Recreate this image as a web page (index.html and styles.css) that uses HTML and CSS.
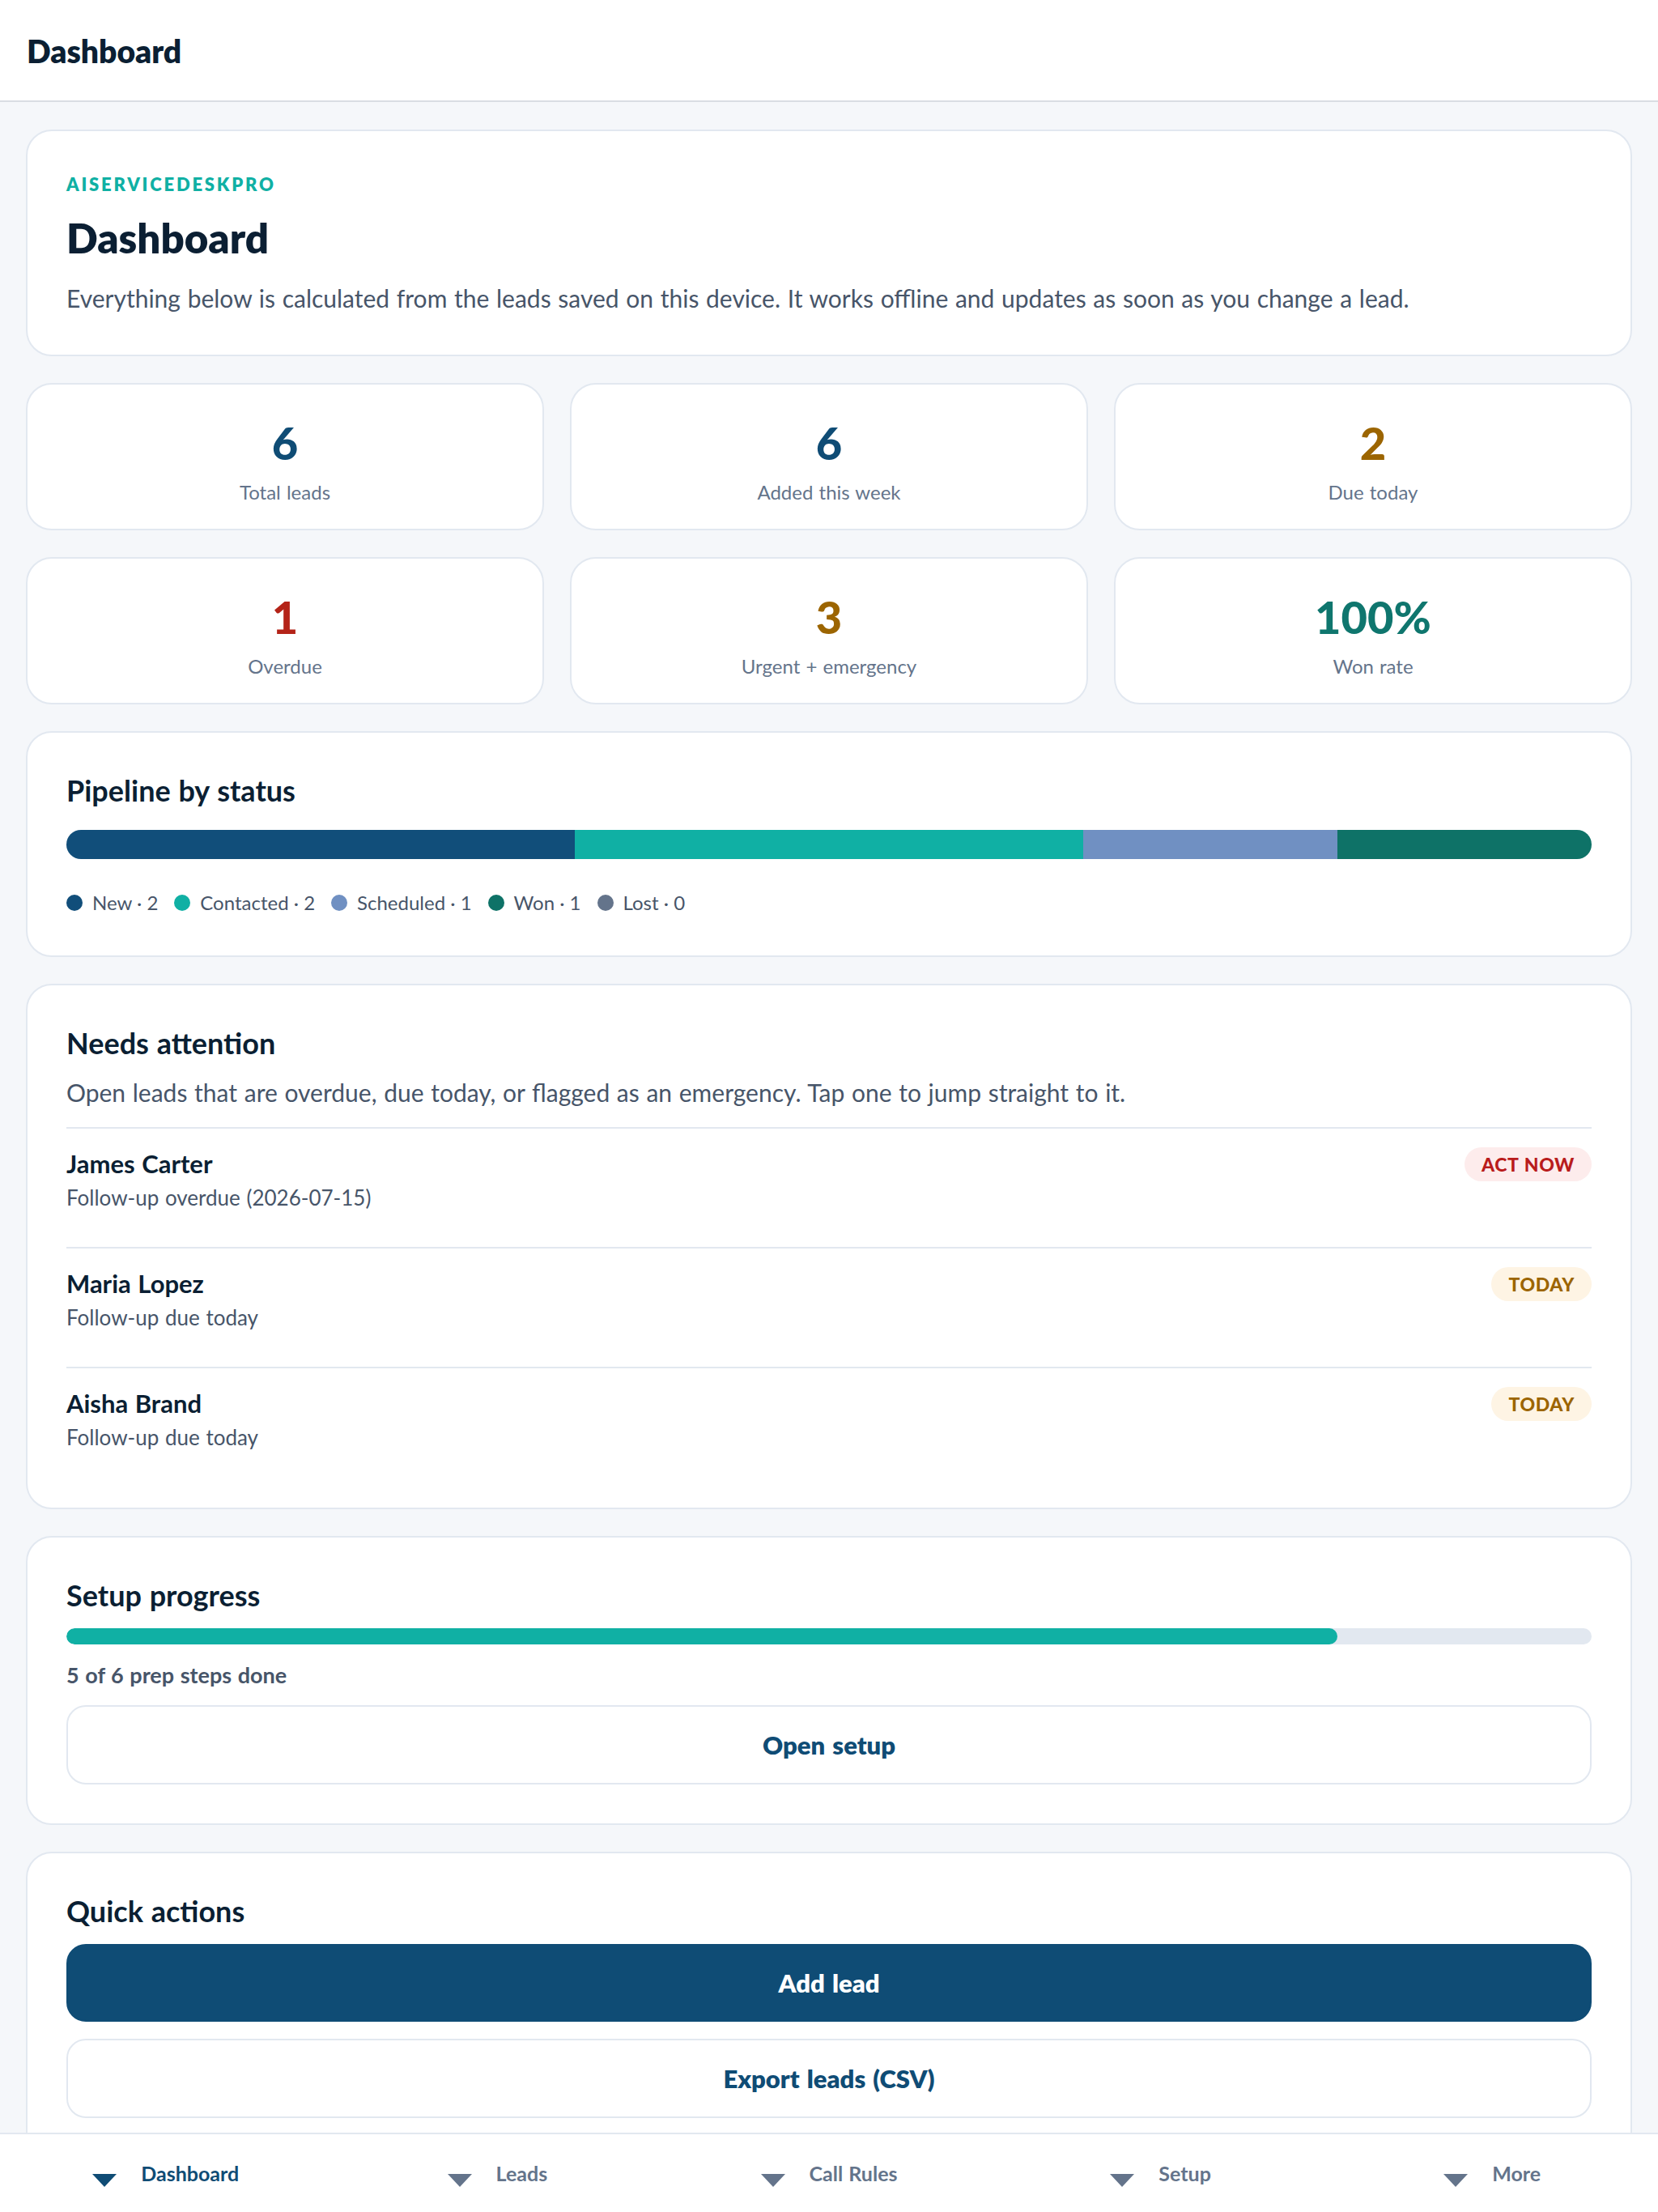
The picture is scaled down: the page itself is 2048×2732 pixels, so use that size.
FILE: index.html
```html
<!DOCTYPE html>
<html>
<head>
  <title>Dashboard</title>
  <meta charset="UTF-8">
  <link rel="stylesheet" href="styles.css">
</head>
<body>
  <header class="topbar">
    <div class="topbar-title">Dashboard</div>
  </header>

  <main class="page">
    <section class="card intro">
      <div class="eyebrow">AISERVICEDESKPRO</div>
      <h1>Dashboard</h1>
      <p class="lead-text">Everything below is calculated from the leads saved on this device. It works offline and updates as soon as you change a lead.</p>
    </section>

    <section class="stats">
      <div class="stat">
        <div class="stat-value navy">6</div>
        <div class="stat-label">Total leads</div>
      </div>
      <div class="stat">
        <div class="stat-value navy">6</div>
        <div class="stat-label">Added this week</div>
      </div>
      <div class="stat">
        <div class="stat-value amber">2</div>
        <div class="stat-label">Due today</div>
      </div>
      <div class="stat">
        <div class="stat-value red">1</div>
        <div class="stat-label">Overdue</div>
      </div>
      <div class="stat">
        <div class="stat-value amber">3</div>
        <div class="stat-label">Urgent + emergency</div>
      </div>
      <div class="stat">
        <div class="stat-value teal">100%</div>
        <div class="stat-label">Won rate</div>
      </div>
    </section>

    <section class="card">
      <h2>Pipeline by status</h2>
      <div class="pipeline-bar">
        <div class="seg new" style="flex: 2"></div>
        <div class="seg contacted" style="flex: 2"></div>
        <div class="seg scheduled" style="flex: 1"></div>
        <div class="seg won" style="flex: 1"></div>
      </div>
      <div class="legend">
        <span class="legend-item"><span class="dot new"></span>New · 2</span>
        <span class="legend-item"><span class="dot contacted"></span>Contacted · 2</span>
        <span class="legend-item"><span class="dot scheduled"></span>Scheduled · 1</span>
        <span class="legend-item"><span class="dot won"></span>Won · 1</span>
        <span class="legend-item"><span class="dot lost"></span>Lost · 0</span>
      </div>
    </section>

    <section class="card">
      <h2>Needs attention</h2>
      <p class="card-note">Open leads that are overdue, due today, or flagged as an emergency. Tap one to jump straight to it.</p>
      <div class="attention-list">
        <div class="attention-row">
          <div>
            <div class="attention-name">James Carter</div>
            <div class="attention-sub">Follow-up overdue (2026-07-15)</div>
          </div>
          <span class="pill danger">ACT NOW</span>
        </div>
        <div class="attention-row">
          <div>
            <div class="attention-name">Maria Lopez</div>
            <div class="attention-sub">Follow-up due today</div>
          </div>
          <span class="pill warn">TODAY</span>
        </div>
        <div class="attention-row">
          <div>
            <div class="attention-name">Aisha Brand</div>
            <div class="attention-sub">Follow-up due today</div>
          </div>
          <span class="pill warn">TODAY</span>
        </div>
      </div>
    </section>

    <section class="card">
      <h2>Setup progress</h2>
      <div class="progress">
        <div class="progress-fill" style="width: 83.33%"></div>
      </div>
      <div class="progress-text">5 of 6 prep steps done</div>
      <button class="btn">Open setup</button>
    </section>

    <section class="card">
      <h2>Quick actions</h2>
      <div class="actions">
        <button class="btn primary">Add lead</button>
        <button class="btn">Export leads (CSV)</button>
      </div>
    </section>
  </main>

  <nav class="tabbar">
    <a class="tab active"><span class="tri"></span>Dashboard</a>
    <a class="tab"><span class="tri"></span>Leads</a>
    <a class="tab"><span class="tri"></span>Call Rules</a>
    <a class="tab"><span class="tri"></span>Setup</a>
    <a class="tab"><span class="tri"></span>More</a>
  </nav>
</body>
</html>
```

FILE: styles.css
```css
* {
  box-sizing: border-box;
}

body {
  margin: 0;
  font-family: Lato, "Noto Sans", sans-serif;
  word-spacing: 1px;
  background-color: #f5f7fa;
  color: #0b1f33;
}

.topbar {
  height: 126px;
  display: flex;
  align-items: center;
  padding: 0 33px;
  background-color: #fff;
  border-bottom: 2px solid #d9dde3;
}

.topbar-title {
  font-size: 39px;
  font-weight: 800;
  margin-top: 2px;
}

.page {
  display: flex;
  flex-direction: column;
  gap: 33px;
  padding: 34px 32px 64px;
}

.card {
  background-color: #fff;
  border: 2px solid #e2e8f0;
  border-radius: 32px;
  padding: 48px;
}

.eyebrow {
  font-size: 22px;
  line-height: 29px;
  font-weight: 800;
  letter-spacing: 2.8px;
  color: #10b0a4;
  margin-top: 3px;
}

h1 {
  margin: 22px 0 0;
  font-size: 51px;
  line-height: 60px;
  font-weight: 800;
}

.lead-text {
  margin: 22px 0 0;
  font-size: 30px;
  line-height: 44px;
  color: #475569;
}

h2 {
  margin: 0;
  font-size: 36px;
  line-height: 46px;
  font-weight: 700;
}

.stats {
  display: grid;
  grid-template-columns: repeat(3, 1fr);
  gap: 33px 32px;
}

.stat {
  display: flex;
  flex-direction: column;
  align-items: center;
  background-color: #fff;
  border: 2px solid #e2e8f0;
  border-radius: 32px;
  padding: 44px 24px 29px;
}

.stat-value {
  font-size: 56px;
  line-height: 56px;
  font-weight: 900;
}

.stat-label {
  margin-top: 17px;
  font-size: 24px;
  line-height: 32px;
  color: #64748b;
}

.navy { color: #0f4c75; }
.amber { color: #9c6500; }
.red { color: #b42318; }
.teal { color: #0f766e; }

.pipeline-bar {
  display: flex;
  height: 36px;
  margin-top: 26px;
  border-radius: 18px;
  overflow: hidden;
}

.seg.new, .dot.new { background-color: #114e7a; }
.seg.contacted, .dot.contacted { background-color: #10b0a4; }
.seg.scheduled, .dot.scheduled { background-color: #7090c2; }
.seg.won, .dot.won { background-color: #0e7267; }
.dot.lost { background-color: #64748b; }

.legend {
  display: flex;
  gap: 20px;
  margin-top: 37px;
  font-size: 24px;
  line-height: 34px;
  word-spacing: 0;
  color: #475569;
}

.legend-item {
  display: flex;
  align-items: center;
  gap: 12px;
}

.dot {
  width: 20px;
  height: 20px;
  border-radius: 50%;
}

.card-note {
  margin: 16px 0 21px;
  font-size: 30px;
  line-height: 44px;
  color: #475569;
}

.attention-row {
  display: flex;
  justify-content: space-between;
  align-items: flex-start;
  padding: 23px 0 43px;
  border-top: 2px solid #e2e8f0;
}

.attention-row:last-child {
  padding-bottom: 21px;
}

.attention-name {
  font-size: 31px;
  line-height: 40px;
  font-weight: 700;
}

.attention-sub {
  margin-top: 4px;
  font-size: 26px;
  line-height: 36px;
  color: #475569;
}

.pill {
  height: 42px;
  padding: 0 21px;
  display: flex;
  align-items: center;
  border-radius: 21px;
  font-size: 23px;
  font-weight: 900;
  letter-spacing: 0.6px;
}

.pill.danger {
  background-color: #fdecec;
  color: #b91c1c;
}

.pill.warn {
  background-color: #fef4e4;
  color: #9c6500;
}

.progress {
  height: 20px;
  margin-top: 18px;
  border-radius: 10px;
  background-color: #e2e8f0;
  overflow: hidden;
}

.progress-fill {
  height: 100%;
  border-radius: 10px;
  background-color: #10b0a4;
}

.progress-text {
  margin: 20px 0 19px;
  font-size: 27px;
  line-height: 36px;
  font-weight: 700;
  color: #475569;
}

.btn {
  display: block;
  width: 100%;
  height: 98px;
  border: 2px solid #e2e8f0;
  border-radius: 24px;
  background-color: #fff;
  color: #0f4c75;
  font-family: inherit;
  font-size: 31px;
  font-weight: 800;
  word-spacing: 2px;
  cursor: pointer;
}

.btn.primary {
  height: 96px;
  background-color: #0f4c75;
  border-color: #0f4c75;
  color: #fff;
}

.actions {
  display: flex;
  flex-direction: column;
  gap: 21px;
  margin-top: 18px;
}

.tabbar {
  position: fixed;
  left: 0;
  right: 0;
  bottom: 0;
  height: 98px;
  display: grid;
  grid-template-columns: repeat(5, 1fr);
  background-color: #fff;
  border-top: 2px solid #e2e8f0;
}

.tab {
  display: flex;
  align-items: center;
  justify-content: center;
  gap: 30px;
  font-size: 25px;
  font-weight: 700;
  color: #64748b;
}

.tab.active {
  color: #0f4c75;
}

.tri {
  width: 0;
  height: 0;
  margin-top: 18px;
  border-left: 15px solid transparent;
  border-right: 15px solid transparent;
  border-top: 16px solid currentColor;
}
```
